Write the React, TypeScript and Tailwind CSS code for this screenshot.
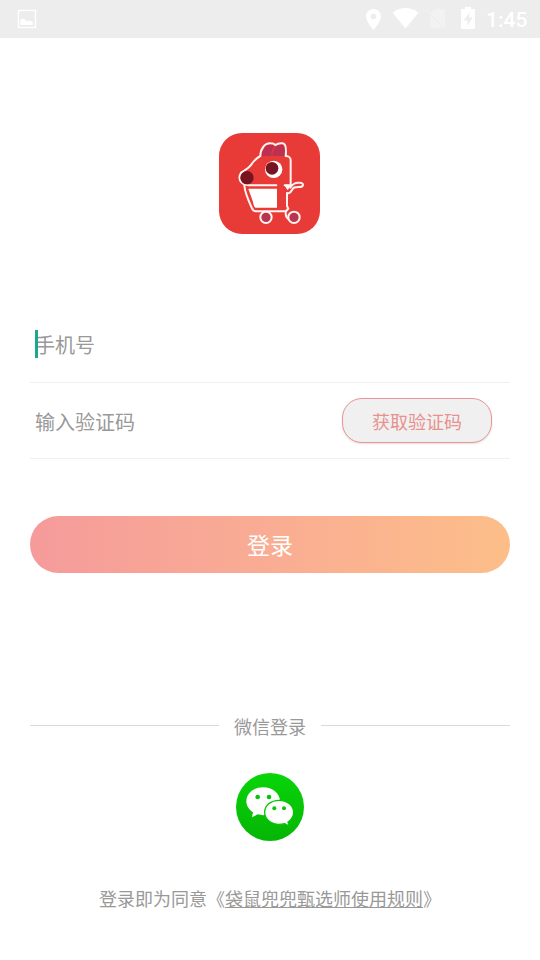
function StatusBar() {
  return (
    <header className="flex h-[38px] items-start justify-between bg-[#ededed] text-white">
      <svg className="mt-[9px] ml-[17px] h-5 w-5" viewBox="0 0 20 20">
        <rect x="1.5" y="1.5" width="17" height="17" fill="none" stroke="white" strokeWidth="1.4" />
        <path d="M3.3 16v-4l1.500-2.300h2l3.200 3 2.500-1.200 3.300 1.600V16z" fill="white" />
      </svg>
      <div className="flex">
        <svg className="h-[38px] w-[126px]" viewBox="0 0 126 38" fill="white">
          <path
            fillRule="evenodd"
            d="M13.500 9C9.300 9 6 12.200 6 16.400c0 5.200 7.500 13.400 7.500 13.400S21 21.600 21 16.400C21 12.200 17.700 9 13.500 9zm0 4.800a2.700 2.700 0 1 1 0 5.400 2.700 2.700 0 0 1 0-5.400z"
          />
          <path d="M45.500 28.500 32.600 12.700C36.300 9.700 40.800 8.100 45.500 8.100s9.200 1.600 12.900 4.600z" />
          <path d="M75 9.300h10V28L70.200 13zM70.200 14.800 83 28H70.200z" opacity=".3" />
          <path d="m67.500 10.200 18.500 18.500" stroke="white" strokeWidth="1" opacity=".3" />
          <path fillRule="evenodd" d="M105 7h6v2h4v20h-14V9h4zm4.800 5.500-6.300 8h4V26l5-8.500h-3.500z" />
        </svg>
        <span className="mt-[7px] mr-[13px] w-[41px] text-right font-[Roboto,sans-serif] text-[21px] leading-[26px] font-medium whitespace-nowrap">
          1:45
        </span>
      </div>
    </header>
  );
}

function AppLogo() {
  return (
    <svg className="mt-[95px] mr-px h-[101px] w-[101px]" viewBox="27 24 303 303">
      <rect x="27" y="24" width="303" height="303" rx="69" fill="#e83a36" />
      <path d="M155 93c1-19 13-36 29-34 6 0 9 4 9 7-6 7-9 16-9 27z" fill="#bc3150" />
      <path d="M187 93c1-20 14-36 30-34 9 1 9 24 7 34z" fill="#bc3150" />
      <g fill="none" stroke="#fff4f2" strokeWidth="6" strokeLinecap="round" strokeLinejoin="round">
        <path d="M94 143c9-8 20-11 28-22 8-11 13-20 29-28 0-20 12-39 31-38 7 0 11 2 14 5 7-5 15-6 22-5 11 2 11 20 9 38 10 1 15 3 15 13v73" />
        <path d="M94 142c-9 12-7 29 7 35 5 3 10 4 15 4h83M224 181h20" />
        <path d="M103 182c2 22 11 42 22 66 3 8 6 11 13 11h89" />
        <path d="M231 204c5 2 11-2 15-9 4-8 8-9 20-9 16 0 18-12 3-13-14-1-23 5-28 15M231 204v39l4 8c-11 8-11 25 3 33" />
      </g>
      <path d="M222 179h22l-11 17z" fill="white" />
      <path d="M115 191h86v57h-64c-5 0-7-13-9-20z" fill="white" />
      <circle cx="191" cy="133" r="26" fill="white" />
      <circle cx="186" cy="130" r="19" fill="#761520" />
      <circle cx="111" cy="158" r="20" fill="#761520" />
      <circle cx="168" cy="277" r="17" fill="#b9354f" stroke="#fff4f2" strokeWidth="6" />
      <circle cx="252" cy="277" r="17" fill="#b9354f" stroke="#fff4f2" strokeWidth="6" />
    </svg>
  );
}

function WechatIcon() {
  return (
    <svg className="h-[68px] w-[68px]" viewBox="108 219 204 204">
      <defs>
        <linearGradient id="wechat" x1="0" y1="0" x2="0" y2="1">
          <stop offset="0" stopColor="#09d509" />
          <stop offset="1" stopColor="#05b505" />
        </linearGradient>
      </defs>
      <circle cx="210" cy="321" r="102" fill="url(#wechat)" />
      <path
        d="M189 262c-28 0-50 18-50 42 0 14 8 25 20 33l-3 15 17-9c7 2 15 3 23 2 28 0 44-20 44-41 0-24-23-42-51-42z"
        fill="white"
      />
      <path
        d="M237 301c-25 0-43 16-43 36s18 36 43 36c6 0 12-1 17-2l14 7-4-12c11-7 17-18 17-29 0-20-19-36-44-36z"
        fill="white"
        stroke="#06c406"
        strokeWidth="4"
      />
      <g fill="#07c507">
        <circle cx="173" cy="291" r="7" />
        <circle cx="207" cy="291" r="7" />
        <circle cx="223" cy="325" r="6" />
        <circle cx="252" cy="325" r="6" />
      </g>
    </svg>
  );
}

export default function App() {
  return (
    <div className="h-[960px] w-[540px] overflow-hidden bg-white font-['Noto_Sans_CJK_SC',sans-serif] text-[#999]">
      <StatusBar />
      <main className="flex flex-col items-center px-[30px]">
        <AppLogo />

        <form className="mt-[72px] flex w-full flex-col" onSubmit={(e) => e.preventDefault()}>
          <div className="flex h-[77px] items-center border-b border-[#f0f0f0] pl-[5px]">
            <div className="relative h-7 text-xl leading-[30px]">
              <span className="absolute top-0 left-0 h-7 w-[3px] bg-[#1aa893]" />
              手机号
            </div>
          </div>
          <div className="flex h-[76px] items-center justify-between border-b border-[#f0f0f0] pr-[18px] pl-[5px]">
            <span className="pt-0.5 text-xl leading-7">输入验证码</span>
            <button
              type="button"
              className="h-[45px] w-[150px] rounded-[20px] border border-[#ec9493] bg-[#f0f0f0] text-lg text-[#e8918f] shadow-[0_1px_2px_rgba(0,0,0,0.12)]"
            >
              获取验证码
            </button>
          </div>
          <button
            type="submit"
            className="mt-[57px] h-[57px] rounded-full bg-linear-to-r from-[#f59b9b] to-[#fdbe89] text-[23px] text-white"
          >
            登录
          </button>
        </form>

        <div className="mt-[139px] flex w-full items-start justify-between">
          <span className="mt-[13px] h-px w-[189px] bg-[#dadada]" />
          <span className="text-lg leading-7">微信登录</span>
          <span className="mt-[13px] h-px w-[189px] bg-[#dadada]" />
        </div>
        <button type="button" className="mt-[33px]">
          <WechatIcon />
        </button>

        <p className="mt-[43px] text-lg leading-7 whitespace-nowrap">
          登录即为同意《<span className="underline decoration-1 underline-offset-1">袋鼠兜兜甄选师使用规则</span>》
        </p>
      </main>
    </div>
  );
}
